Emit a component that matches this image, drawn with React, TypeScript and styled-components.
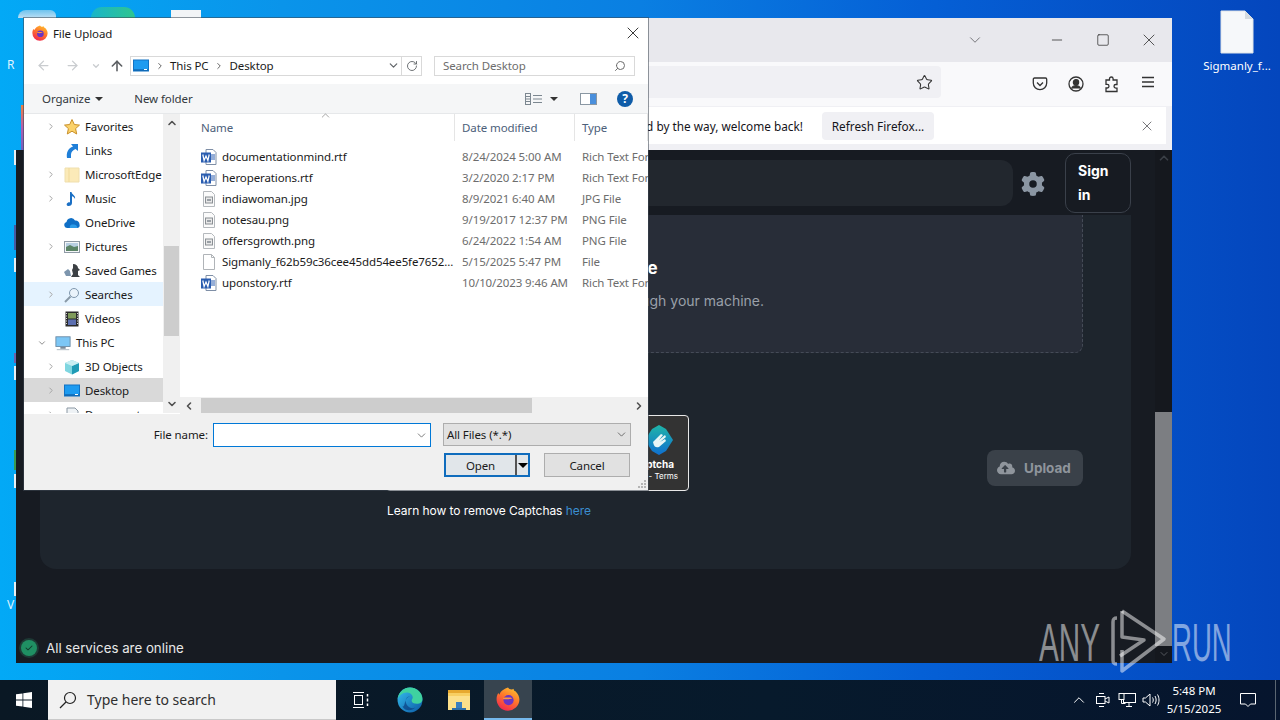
import React from 'react';
import styled, { createGlobalStyle } from 'styled-components';
import { FaCloudUploadAlt } from 'react-icons/fa';
import { FaGear, FaCheck } from 'react-icons/fa6';
import { Star, X, RotateCw, Search, ChevronDown, ChevronRight, ChevronLeft, ChevronUp, ArrowLeft, ArrowRight, ArrowUp, Minus, Square } from 'lucide-react';

const UI_FONT = `"Noto Sans", "Open Sans", sans-serif`;

const GlobalStyle = createGlobalStyle`
    html, body {
        margin: 0;
        padding: 0;
        background: #0a6fe0;
        font-family: ${UI_FONT};
    }
    * { box-sizing: border-box; }
`;

const Desktop = styled.div`
    width: 1280px;
    height: 720px;
    overflow: hidden;
    display: flex;
    flex-direction: column;
    background: linear-gradient(90deg, #03a9f6 0%, #0a94ea 22%, #0a7fe2 50%, #0560d6 72%, #0446bd 100%);
`;

const Workspace = styled.div`
    position: relative;
    flex: 1;
`;

/* ---------- desktop icons ---------- */

const DesktopFile = styled.div`
    position: absolute;
    left: 1205px;
    top: 10px;
    width: 64px;
    display: flex;
    flex-direction: column;
    align-items: center;
    gap: 4px;
    color: #fff;
    font-size: 11.5px;
    line-height: 16px;
    white-space: nowrap;
`;

const Peek = styled.div<{ $x: number; $y: number; $w: number; $h: number; $c: string; $r?: string }>`
    position: absolute;
    left: ${p => p.$x}px;
    top: ${p => p.$y}px;
    width: ${p => p.$w}px;
    height: ${p => p.$h}px;
    background: ${p => p.$c};
    border-radius: ${p => p.$r ?? '0'};
`;

const PeekLabel = styled.span<{ $y: number }>`
    position: absolute;
    left: 7px;
    top: ${p => p.$y}px;
    color: #dff3ff;
    font-size: 12px;
    line-height: 16px;
`;

/* ---------- browser window ---------- */

const BrowserWindow = styled.div`
    position: absolute;
    left: 16px;
    top: 18px;
    width: 1156px;
    height: 645px;
    display: flex;
    flex-direction: column;
`;

const TabStrip = styled.div`
    height: 44px;
    margin-left: 8px;
    background: #e8e8ed;
    display: flex;
    align-items: center;
    justify-content: flex-end;
    color: #3a3a3a;
`;

const TabChevron = styled.span`
    display: flex;
    margin-right: 50px;
    color: #5f5f64;
`;

const WindowButton = styled.span`
    width: 46px;
    display: flex;
    justify-content: center;
    color: #222;
`;

const NavBar = styled.div`
    height: 44px;
    margin-left: 8px;
    background: #f9f9fb;
    display: flex;
    align-items: center;
    padding-right: 6px;
`;

const UrlBar = styled.div`
    width: 917px;
    height: 32px;
    margin-top: -4px;
    background: #f0f0f4;
    border-radius: 4px;
    display: flex;
    align-items: center;
    justify-content: flex-end;
    padding-right: 8px;
    color: #333;
`;

const NavIcons = styled.div`
    margin-left: auto;
    display: flex;
    color: #333;
`;

const NavIcon = styled.span`
    width: 36px;
    display: flex;
    justify-content: center;
`;

const NoticeBar = styled.div`
    height: 44px;
    margin-left: 8px;
    background: #f0f0f4;
    padding: 1px 6px 6px 0;
`;

const NoticeInner = styled.div`
    height: 37px;
    background: #fff;
    display: flex;
    align-items: center;
    font-size: 11.8px;
    color: #15141a;
    position: relative;
`;

const NoticeText = styled.span`
    width: 779px;
    flex: none;
    display: flex;
    justify-content: flex-end;
    white-space: nowrap;
    overflow: hidden;
`;

const RefreshButton = styled.span`
    width: 112px;
    height: 28px;
    margin-left: 19px;
    background: #f0f0f4;
    border-radius: 4px;
    display: flex;
    align-items: center;
    justify-content: center;
`;

const NoticeClose = styled.span`
    margin-left: auto;
    margin-right: 11px;
    display: flex;
    color: #55555a;
`;

/* ---------- web page ---------- */

const Page = styled.div`
    flex: 1;
    min-height: 0;
    display: grid;
    grid-template-columns: 1fr 17px;
    background: #171b22;
    color: #fff;
    font-family: Inter, "Noto Sans", sans-serif;
`;

const PageMain = styled.div`
    display: flex;
    flex-direction: column;
    min-width: 0;
`;

const PageHeader = styled.header`
    height: 65px;
    padding: 3px 24px 0 40px;
    display: flex;
    align-items: flex-start;
`;

const SearchField = styled.div`
    flex: 1;
    height: 46px;
    margin-top: 7px;
    background: #22272e;
    border-radius: 12px;
`;

const GearButton = styled.span`
    width: 40px;
    margin: 19px 12px 0 0;
    display: flex;
    justify-content: center;
    color: #8b96a3;
`;

const SignIn = styled.span`
    width: 66px;
    height: 60px;
    border: 1px solid #3a404a;
    border-radius: 10px;
    padding: 5px 12px;
    font-size: 14px;
    font-weight: 700;
    line-height: 24px;
`;

const Card = styled.section`
    margin: 0 24px;
    height: 354px;
    background: #1e252d;
    border-radius: 0 0 16px 16px;
    padding: 0 48px;
`;

const DropZone = styled.div`
    height: 138px;
    background: #282d38;
    border: 1px dashed #454b57;
    border-top: 0;
    border-radius: 0 0 8px 8px;
    display: flex;
    flex-direction: column;
    align-items: center;
    padding-top: 41px;
`;

const DropTitle = styled.div`
    font-size: 17px;
    font-weight: 700;
    line-height: 24px;
`;

const DropHint = styled.div`
    margin-top: 11px;
    font-size: 14px;
    line-height: 20px;
    color: #9aa0a9;
`;

const ActionRow = styled.div`
    margin-top: 62px;
    display: flex;
    align-items: flex-start;
    padding-left: 298px;
`;

const CaptchaBlock = styled.div`
    width: 303px;
`;

const CaptchaBox = styled.div`
    height: 76px;
    background: #333;
    border: 1px solid #e8e8e8;
    border-radius: 4px;
    display: flex;
    flex-direction: column;
    align-items: flex-end;
    padding: 9px 14px 0 0;
    font-size: 10px;
    font-weight: 700;
    color: #fff;
`;

const CaptchaName = styled.span`
    margin-top: 3px;
    line-height: 12px;
`;

const CaptchaTerms = styled.span`
    font-size: 8px;
    font-weight: 400;
    line-height: 12px;
    margin-right: -4px;
`;

const LearnLine = styled.p`
    margin: 11px 0 0 1px;
    font-size: 12px;
    line-height: 18px;
    color: #fff;
    white-space: nowrap;
    letter-spacing: -0.05px;
`;

const LearnLink = styled.span`
    color: #3b8ed0;
`;

const UploadButton = styled.span`
    width: 96px;
    height: 36px;
    margin: 35px 0 0 auto;
    border-radius: 8px;
    background: #3a4149;
    color: #8f959c;
    display: flex;
    align-items: center;
    gap: 9px;
    padding-left: 10px;
    font-size: 13.5px;
    font-weight: 700;
`;

const Status = styled.div`
    margin-top: auto;
    height: 30px;
    padding: 0 0 1px 5px;
    display: flex;
    align-items: center;
    font-size: 13.3px;
    color: #e8e8e8;
    gap: 9px;
`;

const StatusDot = styled.span`
    width: 16px;
    height: 16px;
    border-radius: 50%;
    background: #1f8f63;
    box-shadow: 0 0 0 2px #1d3a35;
    display: flex;
    align-items: center;
    justify-content: center;
    color: #12392c;
    font-size: 8px;
`;

const PageScroll = styled.div`
    display: flex;
    flex-direction: column;
    align-items: center;
    background: #15181e;
    color: #3a3f46;
`;

const ScrollUp = styled.span`
    height: 262px;
    padding-top: 1px;
    display: flex;
    align-items: flex-start;
`;

const ScrollThumb = styled.div`
    width: 17px;
    height: 234px;
    background: #7c7e82;
`;

const ScrollDown = styled.span`
    display: flex;
    margin-top: 2px;
    color: #55585e;
`;

/* ---------- file dialog ---------- */

const Dialog = styled.div`
    position: absolute;
    left: 24px;
    top: 18px;
    width: 624px;
    height: 472px;
    background: #fff;
    overflow: hidden;
    box-shadow: 0 0 0 1px rgba(60, 70, 80, 0.55);
    display: flex;
    flex-direction: column;
    font-size: 11.5px;
    letter-spacing: -0.1px;
    color: #1a1a1a;
`;

const DialogTitle = styled.div`
    height: 30px;
    flex: none;
    display: flex;
    align-items: center;
    gap: 5px;
    padding: 0 5px 0 8px;
`;

const DialogClose = styled.span`
    margin-left: auto;
    display: flex;
    color: #111;
`;

const AddressRow = styled.div`
    height: 36px;
    flex: none;
    display: flex;
    align-items: center;
    padding: 0 0 1px 10px;
`;

const NavArrow = styled.span<{ $w?: number; $active?: boolean }>`
    width: ${p => p.$w ?? 18}px;
    margin: 0 ${p => (p.$w ? 6 : 11)}px 0 ${p => (p.$w ? -2 : 0)}px;
    display: flex;
    justify-content: center;
    color: ${p => (p.$active ? '#5c5f63' : '#c9cccf')};
`;

const Crumbs = styled.div`
    width: 292px;
    height: 20px;
    margin-left: -7px;
    border: 1px solid #d9d9d9;
    display: flex;
    align-items: center;
    padding-left: 2px;
    gap: 7px;
    color: #1a1a1a;
`;

const CrumbSep = styled.span`
    display: flex;
    color: #666;
    margin: 0 -1.5px;
`;

const CrumbEnd = styled.span`
    margin-left: auto;
    display: flex;
    align-items: center;
    height: 100%;
    color: #606468;
`;

const CrumbEndCell = styled.span<{ $divided?: boolean }>`
    width: ${p => (p.$divided ? 20 : 16)}px;
    height: 100%;
    display: flex;
    align-items: center;
    justify-content: center;
    border-left: ${p => (p.$divided ? '1px solid #d9d9d9' : '0')};
`;

const SearchBox = styled.div`
    width: 201px;
    height: 20px;
    margin-left: 12px;
    border: 1px solid #d9d9d9;
    display: flex;
    align-items: center;
    justify-content: space-between;
    padding: 0 8px;
    color: #6d6d6d;
`;

const CommandBar = styled.div`
    height: 30px;
    flex: none;
    display: flex;
    align-items: center;
    background: #f5f6f7;
    border-bottom: 1px solid #e6e8ea;
    padding: 0 15px 0 18px;
    color: #33383d;
`;

const CommandItem = styled.span`
    display: flex;
    align-items: center;
    gap: 5px;
    margin-right: 31px;
`;

const CaretDown = styled.span`
    width: 0;
    height: 0;
    border-left: 4px solid transparent;
    border-right: 4px solid transparent;
    border-top: 4px solid #333;
`;

const CommandRight = styled.div`
    margin-left: auto;
    display: flex;
    align-items: center;
`;

const ViewGlyph = styled.svg`
    margin-right: 7px;
`;

const PaneGlyph = styled.svg`
    margin-left: 22px;
`;

const HelpIcon = styled.span`
    width: 16px;
    height: 16px;
    margin-left: 20px;
    border-radius: 50%;
    background: #0f5ca8;
    color: #fff;
    font-size: 12px;
    font-weight: 700;
    line-height: 16px;
    text-align: center;
`;

const DialogBody = styled.div`
    height: 300px;
    flex: none;
    display: grid;
    grid-template-columns: 139px 17px 1fr;
`;

const NavPane = styled.div`
    overflow: hidden;
    height: 299px;
`;

const NavRow = styled.div<{ $level: number; $state?: 'hover' | 'selected' }>`
    height: 24px;
    display: flex;
    align-items: center;
    padding: 1px 0 0 ${p => (p.$level === 0 ? 13 : 22)}px;
    background: ${p => (p.$state === 'hover' ? '#e5f3ff' : p.$state === 'selected' ? '#d9d9d9' : 'transparent')};
    white-space: nowrap;
`;

const NavToggle = styled.span`
    width: 10px;
    margin-right: 8px;
    display: flex;
    justify-content: center;
    color: #a6a6a6;
    flex: none;
`;

const NavGlyph = styled.span`
    width: 16px;
    height: 16px;
    margin-right: 5px;
    flex: none;
    display: flex;
`;

const VScroll = styled.div`
    background: #f0f0f0;
    display: flex;
    flex-direction: column;
    align-items: center;
    color: #505050;
    height: 299px;
`;

const ScrollEnd = styled.span`
    display: flex;
    height: 18px;
    align-items: center;
`;

const VThumb = styled.div`
    width: 15px;
    height: 90px;
    margin: 114px 0 59px;
    background: #cdcdcd;
    flex: none;
`;

const FilePane = styled.div`
    display: flex;
    flex-direction: column;
    min-width: 0;
    position: relative;
`;

const FileColumns = `
    display: grid;
    grid-template-columns: 275px 120px 1fr;
    white-space: nowrap;
`;

const FileHeader = styled.div`
    ${FileColumns}
    height: 25px;
    flex: none;
    color: #4c607a;
`;

const HeaderCell = styled.span<{ $first?: boolean }>`
    padding-left: ${p => (p.$first ? 21 : 7)}px;
    line-height: 27px;
    border-right: 1px solid #e5e5e5;
`;

const SortCaret = styled.span`
    position: absolute;
    left: 139px;
    top: -5px;
    display: flex;
    color: #777;
`;

const FileRows = styled.div`
    flex: 1;
    padding-top: 7px;
`;

const FileRow = styled.div`
    ${FileColumns}
    height: 21px;
    line-height: 21px;
    color: #6d6d6d;
`;

const NameCell = styled.span`
    display: flex;
    align-items: center;
    gap: 5px;
    padding-left: 21px;
    color: #1a1a1a;
    svg { flex: none; }
`;

const MetaCell = styled.span`
    padding-left: 7px;
`;

const HScroll = styled.div`
    height: 17px;
    flex: none;
    background: #f0f0f0;
    display: flex;
    align-items: center;
    color: #505050;
    padding: 0 3px;
    justify-content: space-between;
    position: relative;
`;

const HThumb = styled.div`
    position: absolute;
    left: 21px;
    top: 1px;
    width: 331px;
    height: 15px;
    background: #cdcdcd;
`;

const DialogFooter = styled.div`
    flex: 1;
    background: #f0f0f0;
    padding-top: 9px;
    position: relative;
`;

const NameRow = styled.div`
    display: flex;
    align-items: flex-start;
`;

const NameLabel = styled.label`
    width: 184px;
    text-align: right;
    line-height: 24px;
`;

const NameInput = styled.div`
    width: 218px;
    height: 24px;
    margin-left: 5px;
    background: #fff;
    border: 1px solid #0078d7;
    display: flex;
    align-items: center;
    justify-content: flex-end;
    padding-right: 2px;
    color: #606060;
`;

const FilterSelect = styled.div`
    width: 188px;
    height: 23px;
    margin-left: 12px;
    background: #e1e1e1;
    border: 1px solid #adadad;
    display: flex;
    align-items: center;
    justify-content: space-between;
    padding: 0 2px 0 3px;
    color: #1a1a1a;
`;

const ButtonRow = styled.div`
    margin-top: 6px;
    display: flex;
    justify-content: flex-end;
    gap: 14px;
    padding-right: 18px;
`;

const OpenButton = styled.span`
    width: 86px;
    height: 24px;
    background: #e1e6ea;
    border: 2px solid #0f6cbd;
    display: grid;
    grid-template-columns: 1fr 13px;
    align-items: center;
    text-align: center;
`;

const OpenSplit = styled.span`
    height: 100%;
    border-left: 2px solid #555;
    display: flex;
    align-items: center;
    justify-content: center;
`;

const OpenCaret = styled(CaretDown)`
    border-left-width: 5px;
    border-right-width: 5px;
    border-top: 5px solid #000;
`;

const CancelButton = styled.span`
    width: 86px;
    height: 24px;
    background: #e1e1e1;
    border: 1px solid #adadad;
    display: flex;
    align-items: center;
    justify-content: center;
`;

const Grip = styled.svg`
    position: absolute;
    right: 1px;
    bottom: 1px;
`;

/* ---------- taskbar ---------- */

const Taskbar = styled.footer`
    height: 40px;
    flex: none;
    display: flex;
    align-items: stretch;
    background: linear-gradient(90deg, #0a1824 0%, #071a2c 60%, #06152e 100%);
    color: #fff;
`;

const StartButton = styled.span`
    width: 48px;
    display: flex;
    align-items: center;
    justify-content: center;
`;

const TaskSearch = styled.div`
    width: 288px;
    background: #f1f1f1;
    border-bottom: 1px solid #c9c9c9;
    display: flex;
    align-items: center;
    gap: 10px;
    padding-left: 11px;
    color: #2f2f2f;
    font-size: 14px;
`;

const TaskApp = styled.span<{ $active?: boolean }>`
    width: 48px;
    margin-left: 1px;
    display: flex;
    align-items: center;
    justify-content: center;
    background: ${p => (p.$active ? '#37444f' : 'transparent')};
    border-bottom: ${p => (p.$active ? '2px solid #76b9ed' : '0')};
    &:first-of-type { margin-right: 2px; }
`;

const Tray = styled.div`
    margin-left: auto;
    display: flex;
    align-items: center;
`;

const TrayIcon = styled.span`
    width: 24px;
    display: flex;
    justify-content: center;
`;

const Clock = styled.div`
    width: 62px;
    text-align: center;
    font-size: 11.5px;
    line-height: 18px;
`;

const NotifyButton = styled.span`
    width: 45px;
    display: flex;
    justify-content: center;
`;

const ShowDesktop = styled.span`
    width: 5px;
    height: 40px;
    margin-left: 5px;
    border-left: 1px solid #5a6672;
`;

/* ---------- watermark ---------- */

const Watermark = styled.div`
    position: absolute;
    left: 1039px;
    top: 608px;
    width: 200px;
    height: 66px;
    pointer-events: none;
`;

const WatermarkWord = styled.span<{ $x: number; $scale: number }>`
    position: absolute;
    left: ${p => p.$x}px;
    top: 5px;
    font-family: "Liberation Sans", sans-serif;
    font-size: 53px;
    line-height: 60px;
    color: rgba(255, 255, 255, 0.5);
    transform: scaleX(${p => p.$scale});
    transform-origin: left center;
`;

const WatermarkMark = styled.svg`
    position: absolute;
    left: 68px;
    top: 0;
`;

/* ---------- drawn icons ---------- */

const FirefoxLogo = ({ size }: { size: number }) => (
    <svg width={size} height={size} viewBox="1.500 1.500 21 21">
        <defs>
            <linearGradient id={`fx${size}`} x1="0.8" y1="0" x2="0.3" y2="1">
                <stop offset="0" stopColor="#ffc22e" />
                <stop offset="0.45" stopColor="#ff7a2b" />
                <stop offset="1" stopColor="#f2264f" />
            </linearGradient>
        </defs>
        <path d="M12 2c1 2 4 2 5 1-.2 1.200.5 2 1.500 2.200 2.300 2.200 3.500 4.800 3.500 7.300A10 10 0 1 1 2 12c0-2 .6-3.800 1.500-5.200l1 1.400C6 4.500 9 3 12 2z" fill={`url(#fx${size})`} />
        <circle cx="12.500" cy="13" r="4.400" fill="#6a35c4" />
        <path d="M7.500 11.500c2-1.500 3.500-.5 5-.8 1.500-.3 2.500.1 3.300 1.200-1.500-.4-2.800.4-4.600.4s-2.700-.2-3.700-.8z" fill="#ff9a3a" />
    </svg>
);

const WordFile = () => (
    <svg width="16" height="16" viewBox="0 0 16 16">
        <path d="M5 .5h7l3 3v12H5z" fill="#fff" stroke="#7f8fa6" />
        <path d="M10 6h4M10 8h4M10 10h4" stroke="#2a5db0" />
        <rect x="0" y="3.500" width="10" height="10" fill="#2a5db0" />
        <path d="M1.800 5.500l1.300 6 1.900-4.500 1.900 4.500 1.300-6" fill="none" stroke="#fff" strokeWidth="1.200" />
    </svg>
);

const ImageFile = () => (
    <svg width="16" height="16" viewBox="0 0 16 16">
        <path d="M2.500.5h8l3 3v12h-11z" fill="#fbfbfb" stroke="#b5b9bd" />
        <rect x="4.500" y="6" width="7" height="6" fill="#e8e8e8" stroke="#8a8f94" />
        <rect x="6" y="8" width="4" height="2" fill="#9aa0a6" />
    </svg>
);

const BlankFile = () => (
    <svg width="16" height="16" viewBox="0 0 16 16">
        <path d="M2.500.5h8l3 3v12h-11z" fill="#fff" stroke="#b0b4b8" />
        <path d="M10.500.5v3h3" fill="none" stroke="#b0b4b8" />
    </svg>
);

const MonitorBlue = () => (
    <svg width="16" height="16" viewBox="0 0 16 16" style={{ flex: 'none' }}>
        <rect x="0.500" y="2" width="15" height="11" fill="#1d9bf0" stroke="#1173c4" />
        <path d="M1 12h14" stroke="#0a4f94" />
        <path d="M11 11.500h3" stroke="#fff" />
    </svg>
);

const navIcons: Record<string, React.ReactNode> = {
    star: (
        <svg width="16" height="16" viewBox="0 0 16 16">
            <path d="M8 .5l2.300 5 5.200.6-3.900 3.500 1.100 5.400L8 12.200 3.300 15l1.100-5.400L.5 6.100l5.200-.6z" fill="#fbd26a" stroke="#c9902a" />
        </svg>
    ),
    links: (
        <svg width="16" height="16" viewBox="0 0 16 16">
            <path d="M14 1v7l-2.500-2C9 7 7 9 7 11.500V15H3c-1-5 1-10 6-11.500L7 1z" fill="#1f7fd8" />
        </svg>
    ),
    folder: (
        <svg width="16" height="16" viewBox="0 0 16 16">
            <path d="M1 1h14v14H1z" fill="#fbeab8" stroke="#efdfae" />
            <path d="M5 1v14" stroke="#f0d999" />
        </svg>
    ),
    music: (
        <svg width="16" height="16" viewBox="0 0 16 16">
            <path d="M6 1h1.500c.4 2.500 4.500 3.500 3.500 7-.4-1.500-1.800-2.500-3-2.800V12c0 2-2 3.500-4 3-1.800-.5-1.800-2.500-.2-3.300 1-.5 1.700-.4 2.200-.2z" fill="#1a6fc4" />
        </svg>
    ),
    cloud: (
        <svg width="16" height="16" viewBox="0 0 16 16">
            <path d="M3 13a3 3 0 0 1-.5-5.900A4.500 4.500 0 0 1 11 5.600 3.800 3.800 0 0 1 15.500 9.500c.6 1.600-.4 3.500-2.300 3.500z" fill="#0f6fc6" />
            <path d="M6 13c-1-2 1-4 3-3.500 2-.5 4 .5 4.500 3.500z" fill="#2b9be8" />
        </svg>
    ),
    pictures: (
        <svg width="16" height="16" viewBox="0 0 16 16">
            <rect x="0.500" y="2.500" width="15" height="11" fill="#f4f6f8" stroke="#8f9aa5" />
            <rect x="2" y="4" width="12" height="4" fill="#b8cfe2" />
            <path d="M2 8l4-2 4 2 4-1v5H2z" fill="#5b8466" />
        </svg>
    ),
    games: (
        <svg width="16" height="16" viewBox="0 0 16 16">
            <path d="M0 9l4-3 2 2 1 5H2z" fill="#7d95ad" />
            <path d="M9 1c3 0 5 2 5 4l2 2-2 1v4l2 2H7l2-3-1-4 1-2z" fill="#3c4044" />
        </svg>
    ),
    search: (
        <svg width="16" height="16" viewBox="0 0 16 16">
            <circle cx="10" cy="6" r="4.500" fill="#eaf3fb" stroke="#7f97ad" />
            <path d="M6.500 9.500L1 15" stroke="#8a9aa8" strokeWidth="2" />
        </svg>
    ),
    videos: (
        <svg width="16" height="16" viewBox="0 0 16 16">
            <rect x="1.500" y="0.500" width="13" height="15" fill="#2b2b2b" />
            <rect x="4" y="2" width="8" height="5.500" fill="#7f9a5a" />
            <rect x="4" y="8.500" width="8" height="5.500" fill="#5c6fb0" />
            <path d="M2.500 2v12M13.500 2v12" stroke="#d8d8d8" strokeDasharray="1 1.500" />
        </svg>
    ),
    pc: (
        <svg width="18" height="16" viewBox="0 0 18 16">
            <rect x="1" y="1" width="16" height="11" fill="#7cc6f5" stroke="#6b8aa3" />
            <path d="M6 13.500h6" stroke="#7a8a99" strokeWidth="2" />
            <path d="M2 15.500h14" stroke="#a5b2bd" />
        </svg>
    ),
    cube: (
        <svg width="16" height="16" viewBox="0 0 16 16">
            <path d="M8 1l7 3v8l-7 3.500L1 12V4z" fill="#7fd6e0" />
            <path d="M8 7l7-3v8l-7 3.500z" fill="#1f9bb5" />
            <path d="M8 7L1 4l7-3 7 3z" fill="#c9eef2" />
        </svg>
    ),
    desktop: <MonitorBlue />,
    docs: (
        <svg width="16" height="16" viewBox="0 0 16 16">
            <path d="M3 1h8l3 3v11H3z" fill="#eef2f5" stroke="#8a97a3" />
            <path d="M5 7h7M5 10h7" stroke="#6c8fb0" />
        </svg>
    ),
};

const navItems = [
    { label: 'Favorites', icon: 'star', toggle: true, level: 1 },
    { label: 'Links', icon: 'links', level: 1 },
    { label: 'MicrosoftEdge', icon: 'folder', toggle: true, level: 1 },
    { label: 'Music', icon: 'music', toggle: true, level: 1 },
    { label: 'OneDrive', icon: 'cloud', level: 1 },
    { label: 'Pictures', icon: 'pictures', toggle: true, level: 1 },
    { label: 'Saved Games', icon: 'games', level: 1 },
    { label: 'Searches', icon: 'search', toggle: true, level: 1, state: 'hover' as const },
    { label: 'Videos', icon: 'videos', level: 1 },
    { label: 'This PC', icon: 'pc', open: true, level: 0 },
    { label: '3D Objects', icon: 'cube', toggle: true, level: 1 },
    { label: 'Desktop', icon: 'desktop', toggle: true, level: 1, state: 'selected' as const },
    { label: 'Documents', icon: 'docs', toggle: true, level: 1 },
];

const files = [
    { name: 'documentationmind.rtf', date: '8/24/2024 5:00 AM', type: 'Rich Text Format', kind: 'word' },
    { name: 'heroperations.rtf', date: '3/2/2020 2:17 PM', type: 'Rich Text Format', kind: 'word' },
    { name: 'indiawoman.jpg', date: '8/9/2021 6:40 AM', type: 'JPG File', kind: 'image' },
    { name: 'notesau.png', date: '9/19/2017 12:37 PM', type: 'PNG File', kind: 'image' },
    { name: 'offersgrowth.png', date: '6/24/2022 1:54 AM', type: 'PNG File', kind: 'image' },
    { name: 'Sigmanly_f62b59c36cee45dd54ee5fe7652...', date: '5/15/2025 5:47 PM', type: 'File', kind: 'blank' },
    { name: 'uponstory.rtf', date: '10/10/2023 9:46 AM', type: 'Rich Text Format', kind: 'word' },
];

const fileIcon = (kind: string) => {
    if (kind === 'word') return <WordFile />;
    if (kind === 'image') return <ImageFile />;
    return <BlankFile />;
};

const App: React.FC = () => (
    <Desktop>
        <GlobalStyle />
        <Workspace>
            <Peek $x={18} $y={10} $w={38} $h={8} $c="linear-gradient(180deg, #6ec3ee, #bcdff4)" $r="14px 10px 0 0" />
            <Peek $x={91} $y={7} $w={44} $h={11} $c="linear-gradient(90deg, #19b5c9, #2fc58f)" $r="22px 22px 0 0" />
            <Peek $x={171} $y={10} $w={30} $h={8} $c="#f2f4f6" />
            <Peek $x={21} $y={105} $w={3} $h={45} $c="linear-gradient(180deg, #f08040, #b060b0, #7060c0)" />
            <Peek $x={14} $y={150} $w={2} $h={15} $c="#e8eef2" />
            <Peek $x={14} $y={225} $w={2} $h={25} $c="#4858a0" />
            <Peek $x={14} $y={258} $w={2} $h={14} $c="#e8eef2" />
            <Peek $x={14} $y={353} $w={2} $h={10} $c="#7060a8" />
            <Peek $x={14} $y={366} $w={2} $h={14} $c="#e8eef2" />
            <Peek $x={14} $y={450} $w={2} $h={20} $c="#3a9a50" />
            <Peek $x={14} $y={474} $w={2} $h={14} $c="#e8eef2" />
            <Peek $x={14} $y={582} $w={2} $h={14} $c="#e8eef2" />
            <PeekLabel $y={57}>R</PeekLabel>
            <PeekLabel $y={597}>V</PeekLabel>

            <DesktopFile>
                <svg width="34" height="44" viewBox="0 0 34 44">
                    <path d="M1 1h24l8 8v34H1z" fill="#f6f8fa" stroke="#dfe4e8" />
                    <path d="M25 1v8h8" fill="#d5dbe0" />
                </svg>
                <span>Sigmanly_f...</span>
            </DesktopFile>

            <BrowserWindow>
                <TabStrip>
                    <TabChevron><ChevronDown size={18} strokeWidth={1.1} /></TabChevron>
                    <WindowButton><Minus size={16} strokeWidth={1.1} /></WindowButton>
                    <WindowButton><Square size={14} strokeWidth={1.2} /></WindowButton>
                    <WindowButton><X size={20} strokeWidth={0.9} /></WindowButton>
                </TabStrip>
                <NavBar>
                    <UrlBar><Star size={17} strokeWidth={1.5} /></UrlBar>
                    <NavIcons>
                        <NavIcon>
                            <svg width="16" height="16" viewBox="0 0 16 16" fill="none" stroke="#333" strokeWidth="1.300">
                                <path d="M2.500 2h11c.8 0 1.200.5 1.200 1.200V7a6.700 6.700 0 0 1-13.400 0V3.200c0-.7.400-1.200 1.200-1.200z" />
                                <path d="M5 6.500l3 3 3-3" />
                            </svg>
                        </NavIcon>
                        <NavIcon>
                            <svg width="16" height="16" viewBox="0 0 16 16" fill="none" stroke="#333" strokeWidth="1.300">
                                <circle cx="8" cy="8" r="7" />
                                <circle cx="8" cy="6.200" r="2.600" fill="#333" />
                                <path d="M3.500 12.500c1-2 2.500-2.800 4.500-2.800s3.500.8 4.500 2.800" fill="#333" />
                            </svg>
                        </NavIcon>
                        <NavIcon>
                            <svg width="16" height="17" viewBox="0 0 16 17" fill="none" stroke="#333" strokeWidth="1.300">
                                <path d="M5.500 4V2.800a1.800 1.800 0 0 1 3.600 0V4H13v4.500h-1.200a1.800 1.800 0 0 0 0 3.600H13V15.500H2V12h1.200a1.800 1.800 0 0 0 0-3.600H2V4z" />
                            </svg>
                        </NavIcon>
                        <NavIcon>
                            <svg width="14" height="12" viewBox="0 0 14 12" stroke="#333" strokeWidth="1.300">
                                <path d="M1 1.500h12M1 6h12M1 10.500h12" />
                            </svg>
                        </NavIcon>
                    </NavIcons>
                </NavBar>
                <NoticeBar>
                    <NoticeInner>
                        <NoticeText>And by the way, welcome back!</NoticeText>
                        <RefreshButton>Refresh Firefox...</RefreshButton>
                        <NoticeClose><X size={16} strokeWidth={1.2} /></NoticeClose>
                    </NoticeInner>
                </NoticeBar>
                <Page>
                    <PageMain>
                        <PageHeader>
                            <SearchField />
                            <GearButton><FaGear size={24} /></GearButton>
                            <SignIn>Sign in</SignIn>
                        </PageHeader>
                        <Card>
                            <DropZone>
                                <DropTitle>Upload a file here</DropTitle>
                                <DropHint>Select a file or drag and drop it through your machine.</DropHint>
                            </DropZone>
                            <ActionRow>
                                <CaptchaBlock>
                                    <CaptchaBox>
                                        <svg width="30" height="30" viewBox="0 0 30 30">
                                            <defs>
                                                <linearGradient id="cap" x1="0" y1="0" x2="0" y2="1">
                                                    <stop offset="0" stopColor="#1fb5a8" />
                                                    <stop offset="1" stopColor="#0f6fd0" />
                                                </linearGradient>
                                            </defs>
                                            <path d="M15 0l7 4 7 11-7 11-7 4-7-4-7-11L8 4z" fill="url(#cap)" />
                                            <path d="M9 17l8-8 2 1-4 5 6-5 1 2-6 5 5-3 1 2-7 6c-3 1-5 0-6-5z" fill="#e8f6f6" />
                                        </svg>
                                        <CaptchaName>hCaptcha</CaptchaName>
                                        <CaptchaTerms>Privacy - Terms</CaptchaTerms>
                                    </CaptchaBox>
                                    <LearnLine>Learn how to remove Captchas <LearnLink>here</LearnLink></LearnLine>
                                </CaptchaBlock>
                                <UploadButton><FaCloudUploadAlt size={18} />Upload</UploadButton>
                            </ActionRow>
                        </Card>
                        <Status>
                            <StatusDot><FaCheck /></StatusDot>
                            All services are online
                        </Status>
                    </PageMain>
                    <PageScroll>
                        <ScrollUp><ChevronUp size={14} strokeWidth={3} /></ScrollUp>
                        <ScrollThumb />
                        <ScrollDown><ChevronDown size={12} strokeWidth={2} /></ScrollDown>
                    </PageScroll>
                </Page>
            </BrowserWindow>

            <Dialog>
                <DialogTitle>
                    <FirefoxLogo size={16} />
                    File Upload
                    <DialogClose><X size={20} strokeWidth={1} /></DialogClose>
                </DialogTitle>
                <AddressRow>
                    <NavArrow><ArrowLeft size={15} /></NavArrow>
                    <NavArrow><ArrowRight size={15} /></NavArrow>
                    <NavArrow $w={12}><ChevronDown size={10} strokeWidth={3} /></NavArrow>
                    <NavArrow $active><ArrowUp size={16} strokeWidth={2.4} /></NavArrow>
                    <Crumbs>
                        <MonitorBlue />
                        <CrumbSep><ChevronRight size={10} strokeWidth={2.4} /></CrumbSep>
                        <span>This PC</span>
                        <CrumbSep><ChevronRight size={10} strokeWidth={2.4} /></CrumbSep>
                        <span>Desktop</span>
                        <CrumbEnd>
                            <CrumbEndCell><ChevronDown size={13} strokeWidth={2.2} /></CrumbEndCell>
                            <CrumbEndCell $divided><RotateCw size={12} strokeWidth={1.8} /></CrumbEndCell>
                        </CrumbEnd>
                    </Crumbs>
                    <SearchBox>
                        Search Desktop
                        <Search size={12} strokeWidth={2} style={{ transform: 'scaleX(-1)' }} />
                    </SearchBox>
                </AddressRow>
                <CommandBar>
                    <CommandItem>Organize <CaretDown /></CommandItem>
                    <CommandItem>New folder</CommandItem>
                    <CommandRight>
                        <ViewGlyph width="18" height="12" viewBox="0 0 18 12" stroke="#7c8790" fill="none">
                            <rect x="0.500" y="0.500" width="5" height="11" />
                            <path d="M1 3.500h4M1 6h4M1 8.500h4M8 2.500h9M8 6h9M8 9.500h9" />
                        </ViewGlyph>
                        <CaretDown />
                        <PaneGlyph width="17" height="12" viewBox="0 0 17 12">
                            <rect x="0.500" y="0.500" width="16" height="11" fill="#fff" stroke="#8a97a3" />
                            <rect x="10" y="1" width="6" height="10" fill="#4a8fdc" />
                        </PaneGlyph>
                        <HelpIcon>?</HelpIcon>
                    </CommandRight>
                </CommandBar>
                <DialogBody>
                    <NavPane>
                        {navItems.map(item => (
                            <NavRow key={item.label} $level={item.level} $state={item.state}>
                                <NavToggle>
                                    {item.toggle && <ChevronRight size={11} strokeWidth={2.4} />}
                                    {item.open && <ChevronDown size={12} strokeWidth={2} color="#777" />}
                                </NavToggle>
                                <NavGlyph>{navIcons[item.icon]}</NavGlyph>
                                {item.label}
                            </NavRow>
                        ))}
                    </NavPane>
                    <VScroll>
                        <ScrollEnd><ChevronUp size={12} strokeWidth={3.2} /></ScrollEnd>
                        <VThumb />
                        <ScrollEnd><ChevronDown size={12} strokeWidth={3.2} /></ScrollEnd>
                    </VScroll>
                    <FilePane>
                        <SortCaret><ChevronUp size={13} strokeWidth={1.2} /></SortCaret>
                        <FileHeader>
                            <HeaderCell $first>Name</HeaderCell>
                            <HeaderCell>Date modified</HeaderCell>
                            <HeaderCell>Type</HeaderCell>
                        </FileHeader>
                        <FileRows>
                            {files.map(file => (
                                <FileRow key={file.name}>
                                    <NameCell>{fileIcon(file.kind)}{file.name}</NameCell>
                                    <MetaCell>{file.date}</MetaCell>
                                    <MetaCell>{file.type}</MetaCell>
                                </FileRow>
                            ))}
                        </FileRows>
                        <HScroll>
                            <ChevronLeft size={12} strokeWidth={3.2} />
                            <HThumb />
                            <ChevronRight size={12} strokeWidth={3.2} />
                        </HScroll>
                    </FilePane>
                </DialogBody>
                <DialogFooter>
                    <NameRow>
                        <NameLabel>File name:</NameLabel>
                        <NameInput><ChevronDown size={13} strokeWidth={1.5} /></NameInput>
                        <FilterSelect>
                            All Files (*.*)
                            <ChevronDown size={13} strokeWidth={1.5} color="#555" />
                        </FilterSelect>
                    </NameRow>
                    <ButtonRow>
                        <OpenButton>
                            <span>Open</span>
                            <OpenSplit><OpenCaret /></OpenSplit>
                        </OpenButton>
                        <CancelButton>Cancel</CancelButton>
                    </ButtonRow>
                    <Grip width="10" height="10" viewBox="0 0 10 10" fill="#b5b5b5">
                        <path d="M7 1h2v2H7zM4 4h2v2H4zM7 4h2v2H7zM1 7h2v2H1zM4 7h2v2H4zM7 7h2v2H7z" />
                    </Grip>
                </DialogFooter>
            </Dialog>

            <Watermark>
                <WatermarkWord $x={0} $scale={0.56}>ANY</WatermarkWord>
                <WatermarkMark width="66" height="66" viewBox="0 0 66 66" fill="none" stroke="rgba(255,255,255,0.5)" strokeWidth="3.500">
                    <path d="M10 10c-3 0-4 1-4 4v38c0 3 1 4 4 4" />
                    <path d="M15 3l42 28-42 32V42" strokeLinejoin="round" />
                    <path d="M15 3v26l22 3-24 16" strokeLinejoin="round" />
                </WatermarkMark>
                <WatermarkWord $x={133} $scale={0.52}>RUN</WatermarkWord>
            </Watermark>
        </Workspace>

        <Taskbar>
            <StartButton>
                <svg width="16" height="16" viewBox="0 0 16 16" fill="#fff">
                    <path d="M0 2.300l6.500-.9v6.200H0zM7.300 1.300L16 0v7.600H7.300zM0 8.400h6.500v6.200L0 13.700zM7.300 8.400H16V16l-8.700-1.300z" />
                </svg>
            </StartButton>
            <TaskSearch>
                <svg width="18" height="18" viewBox="0 0 18 18" fill="none" stroke="#222" strokeWidth="1.200">
                    <circle cx="11" cy="7" r="5.500" />
                    <path d="M7 11l-6 6" />
                </svg>
                Type here to search
            </TaskSearch>
            <TaskApp>
                <svg width="16" height="16" viewBox="0 0 16 16" fill="none" stroke="#fff">
                    <path d="M0 .5h11M0 15.500h11" />
                    <rect x="1.500" y="3.500" width="8" height="9" />
                    <path d="M14.500 2v2.500M14.500 6.500v3M14.500 11.500V14" strokeWidth="1.500" />
                </svg>
            </TaskApp>
            <TaskApp>
                <svg width="26" height="26" viewBox="0 0 24 24">
                    <defs>
                        <linearGradient id="edgeA" x1="0" y1="0" x2="1" y2="1">
                            <stop offset="0" stopColor="#35c1f1" />
                            <stop offset="1" stopColor="#0c59a4" />
                        </linearGradient>
                    </defs>
                    <circle cx="12" cy="12" r="11.500" fill="url(#edgeA)" />
                    <path d="M12 .5C18 .5 23.500 5 23.500 11c0 3-2.500 4.500-5 4.500-3 0-5-1-5-3 0-1 1-1.500 1-3C14.500 7 12 5 9 5 5 5 2 8 .6 11 1.500 5 6 .5 12 .5z" fill="#3fd1a0" />
                    <path d="M12 8.500c-2.500 0-4 2-4 4.500 0 4 4 8 9 6-3 3-9 4-12-1 3 1 1-8 7-9.500z" fill="#0b3f80" opacity="0.7" />
                </svg>
            </TaskApp>
            <TaskApp>
                <svg width="24" height="22" viewBox="0 0 24 22">
                    <path d="M1 1h8l2 3h12v17H1z" fill="#f8cf62" />
                    <path d="M1 7h22v14H1z" fill="#fce08a" />
                    <path d="M1 1h22v3H1z" fill="#e7a92f" />
                    <rect x="9" y="13" width="6" height="6" fill="#3a7fc0" />
                    <rect x="5" y="19" width="14" height="2" fill="#2d6ea8" />
                </svg>
            </TaskApp>
            <TaskApp $active><FirefoxLogo size={24} /></TaskApp>
            <Tray>
                <TrayIcon><ChevronUp size={18} strokeWidth={1.3} /></TrayIcon>
                <TrayIcon>
                    <svg width="16" height="16" viewBox="0 0 16 16" fill="none" stroke="#fff">
                        <rect x="1.500" y="4.500" width="8.500" height="7" />
                        <path d="M10 7l4-2v6l-4-2" />
                        <path d="M4 1.500h5M4 14.500h5" />
                    </svg>
                </TrayIcon>
                <TrayIcon>
                    <svg width="18" height="16" viewBox="0 0 18 16" fill="none" stroke="#fff">
                        <rect x="5.500" y="1.500" width="12" height="9" />
                        <rect x="1" y="1.500" width="5" height="6" fill="#071a2c" />
                        <path d="M11 11v3M8 14.500h6M3.500 8v3.500h4" />
                    </svg>
                </TrayIcon>
                <TrayIcon>
                    <svg width="18" height="16" viewBox="0 0 18 16" fill="none" stroke="#fff">
                        <path d="M1 6h2.500L8 2v12l-4.500-4H1z" />
                        <path d="M10.500 5.500c1 1.500 1 3.500 0 5M13 4c1.500 2.500 1.500 5.500 0 8M15.500 2.500c2 3.500 2 7.500 0 11" />
                    </svg>
                </TrayIcon>
                <Clock>5:48 PM<br />5/15/2025</Clock>
                <NotifyButton>
                    <svg width="16" height="16" viewBox="0 0 16 16" fill="none" stroke="#fff">
                        <path d="M.5 1.500h15v10.500h-5L8 14.500 5.500 12h-5z" />
                    </svg>
                </NotifyButton>
                <ShowDesktop />
            </Tray>
        </Taskbar>
    </Desktop>
);

export default App;
